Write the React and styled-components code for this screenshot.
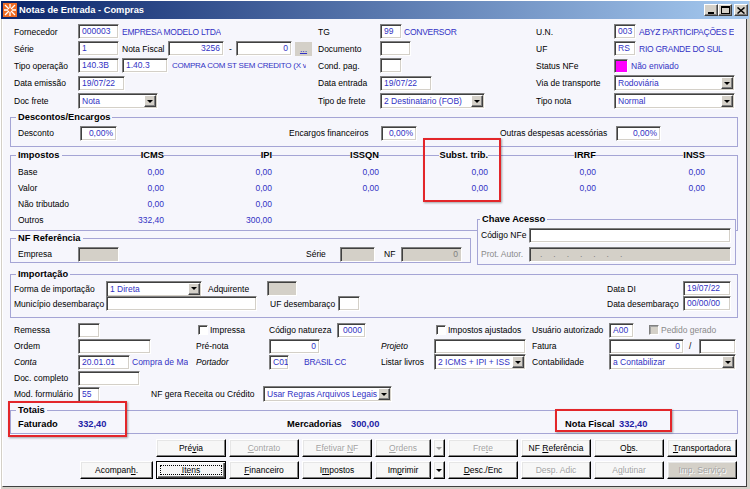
import React from "react";
import styled, { createGlobalStyle, css } from "styled-components";

const FONT = `"Liberation Sans", Arial, sans-serif`;
const BLUE = "#3232c4";
const NAVY = "#2323a6";
const BG = "#f6f6fc";
const FACE = "#d4d0c8";
const LINE = "#a5a5d5";

const GlobalStyle = createGlobalStyle`
  * { box-sizing: border-box; }
  html, body { margin: 0; padding: 0; background: ${FACE}; overflow: hidden; }
  body { font-family: ${FONT}; font-size: 8.5px; color: #000; }
`;

const Window = styled.div`
  position: relative;
  width: 750px;
  height: 489px;
  background: ${FACE};
  padding: 1px 1px 2px 1px;
  display: flex;
  flex-direction: column;
  box-shadow: inset 1px 1px 0 #fff;
`;

const TitleBar = styled.div`
  flex: none;
  height: 18px;
  display: flex;
  align-items: center;
  gap: 2px;
  padding: 0 1px 0 2px;
  background: linear-gradient(to right, #0a246a, #a6caf0);
  color: #fff;
  font-weight: bold;
  font-size: 9.3px;
`;

const Caps = styled.div`
  margin-left: auto;
  display: flex;
  align-items: center;
`;

const CapBtn = styled.div`
  width: 14px;
  height: 12px;
  margin-left: ${(p) => (p.$gap ? 2 : 0)}px;
  background: ${FACE};
  border: 1px solid;
  border-color: #fff #404040 #404040 #fff;
  box-shadow: inset -1px -1px 0 #808080;
  display: flex;
  align-items: center;
  justify-content: center;
`;

const Body = styled.div`
  flex: 1;
  margin: 0 2px 0 1px;
  background: ${BG};
  border-left: 1px solid #fff;
  border-right: 1px solid #404040;
  border-bottom: 1px solid #404040;
  padding: 4px 8px 0 7px;
  display: flex;
  flex-direction: column;
`;

const TopGrid = styled.div`
  display: grid;
  grid-template-columns: 64px 240px 62px 156px 78px 1fr;
  grid-template-rows: 17px 17px 17px 18px 18px;
  align-items: center;
  padding-left: 4px;
`;

const Cell = styled.div`
  display: flex;
  align-items: center;
  min-width: 0;
  height: 100%;
  ${(p) => p.$span && css`grid-column: span ${p.$span};`}
`;

const Lbl = styled.span`
  flex: none;
  white-space: nowrap;
  ${(p) => p.$w != null && css`width: ${p.$w}px;`}
  ${(p) => p.$ml != null && css`margin-left: ${p.$ml}px;`}
  ${(p) => p.$italic && css`font-style: italic;`}
  ${(p) => p.$dim && css`color: #8a8a8a;`}
  ${(p) => p.$bold && css`font-weight: bold; font-size: 9.3px;`}
`;

const Val = styled.span`
  flex: none;
  white-space: nowrap;
  overflow: hidden;
  color: ${(p) => (p.$bold ? NAVY : BLUE)};
  margin-left: ${(p) => p.$ml || 0}px;
  ${(p) => p.$w != null && css`width: ${p.$w}px;`}
  ${(p) => p.$bold && css`font-weight: bold; font-size: 9.3px;`}
  ${(p) => p.$caps && css`letter-spacing: -0.25px;`}
  ${(p) => p.$small && css`font-size: 8px;`}
`;

const sunken = css`
  border: 1px solid;
  border-color: #808080 #ffffff #ffffff #808080;
  box-shadow: inset 1px 1px 0 #404040, inset -1px -1px 0 #d4d0c8;
`;

const Field = styled.div`
  flex: none;
  width: ${(p) => p.$w}px;
  height: 15px;
  margin-left: ${(p) => p.$ml || 0}px;
  ${sunken}
  background: ${(p) => (p.$disabled ? FACE : "#fff")};
  color: ${(p) => (p.$disabled ? "#808080" : BLUE)};
  text-align: ${(p) => (p.$right ? "right" : "left")};
  padding: 0 3px;
  line-height: 13px;
  white-space: nowrap;
  overflow: hidden;
  ${(p) => p.$dots && css`letter-spacing: 4.3px; padding-left: 10px;`}
`;

const SelectBox = styled.div`
  flex: none;
  width: ${(p) => p.$w}px;
  height: 16px;
  margin-left: ${(p) => p.$ml || 0}px;
  display: flex;
  align-items: stretch;
  background: #fff;
  ${sunken}
  padding: 1px;
`;

const SelectText = styled.div`
  flex: 1;
  min-width: 0;
  padding-left: 2px;
  color: ${BLUE};
  line-height: 12px;
  overflow: hidden;
  white-space: nowrap;
`;

const DropBtn = styled.div`
  flex: none;
  width: 12px;
  background: ${FACE};
  border: 1px solid;
  border-color: #fff #404040 #404040 #fff;
  box-shadow: inset -1px -1px 0 #808080;
  display: flex;
  align-items: center;
  justify-content: center;
`;

const Tri = styled.span`
  width: 0;
  height: 0;
  border-left: 3px solid transparent;
  border-right: 3px solid transparent;
  border-top: 3px solid ${(p) => (p.$dim ? "#a0a0a0" : "#000")};
`;

const DotBtn = styled.div`
  flex: none;
  width: 17px;
  height: 14px;
  margin-left: 3px;
  background: ${FACE};
  color: ${BLUE};
  text-align: center;
  line-height: 14px;
  text-decoration: underline;
`;

const Status = styled.span`
  flex: none;
  width: 14px;
  height: 14px;
  background: #ff00ff;
  border: 1px solid;
  border-color: #808080 #fff #fff #808080;
  box-shadow: inset 1px 1px 0 #404040;
`;

const Check = styled.span`
  flex: none;
  width: 10px;
  height: 10px;
  margin: 0 2px 0 ${(p) => p.$ml || 0}px;
  background: ${(p) => (p.$disabled ? FACE : "#fff")};
  border: 1px solid;
  border-color: #808080 #fff #fff #808080;
  box-shadow: inset 1px 1px 0 ${(p) => (p.$disabled ? "#a0a0a0" : "#404040")};
`;

const Group = styled.fieldset`
  margin: ${(p) => p.$mt || 0}px 0 0 0;
  min-width: 0;
  flex: none;
  ${(p) => p.$w && css`width: ${p.$w}px;`}
  border: 1px solid ${LINE};
  padding: ${(p) => p.$pt || 0}px 6px ${(p) => p.$pb || 0}px 3px;
  background: ${BG};
  position: relative;
  ${(p) => p.$over && css`z-index: 1;`}
`;

const Legend = styled.legend`
  margin-left: ${(p) => (p.$ml != null ? p.$ml : 2)}px;
  padding: 0 2px;
  height: 11px;
  line-height: 11px;
  font-weight: bold;
  font-size: 9.3px;
  white-space: nowrap;
  ${(p) => p.$full && css`width: calc(100% - 2px); padding-right: 0;`}
`;

const Row = styled.div`
  display: flex;
  align-items: center;
  height: ${(p) => p.$h || 16}px;
  padding-left: ${(p) => p.$pl || 0}px;
  margin-top: ${(p) => p.$mt || 0}px;
`;

const Spacer = styled.div`
  flex: 1;
`;

const TAX_COLS = "56px 90px 108px 107px 109px 108px 109px";

const TaxHead = styled.div`
  display: grid;
  grid-template-columns: ${TAX_COLS} 1fr;
  align-items: center;
  height: 11px;
`;

const HeadCell = styled.div`
  display: flex;
  align-items: center;
  height: 11px;
`;

const HLine = styled.span`
  flex: 1;
  height: 0;
  border-top: 1px solid ${LINE};
  margin-left: ${(p) => (p.$after ? 3 : 0)}px;
`;

const TaxGrid = styled.div`
  display: grid;
  grid-template-columns: ${TAX_COLS};
  grid-auto-rows: 16px;
  align-items: center;
  padding-left: 4px;
`;

const Num = styled.span`
  text-align: right;
  color: ${BLUE};
  white-space: nowrap;
`;

const SplitRow = styled.div`
  display: flex;
  align-items: flex-start;
  gap: 6px;
`;

const FormGrid = styled.div`
  display: grid;
  grid-template-columns: 64px 118px 73px 112px 53px 98px 77px 1fr;
  grid-auto-rows: 16px;
  align-items: center;
  padding-left: 4px;
  margin-top: 4px;
`;

const TotalGrid = styled.div`
  display: grid;
  grid-template-columns: 60px 209px 64px 214px 54px 1fr;
  height: 16px;
  align-items: center;
  padding-left: 4px;
`;

const BtnGrid = styled.div`
  display: grid;
  grid-template-columns: 73px repeat(8, 70px);
  grid-auto-rows: 18px;
  column-gap: 3px;
  row-gap: 4px;
  margin: 5px 0 0 70px;
`;

const Btn = styled.button`
  height: 18px;
  margin: 0;
  padding: 0;
  min-width: 0;
  font-family: ${FONT};
  font-size: 8.5px;
  background: ${(p) => (p.$grey ? FACE : "#f7f7f7")};
  border: 1px solid;
  border-color: #ffffff #000000 #000000 #ffffff;
  box-shadow: inset -1px -1px 0 #808080, inset 1px 1px 0 #e6e6e6;
  color: ${(p) => (p.disabled ? "#a3a3a3" : "#000")};
  text-shadow: ${(p) => (p.disabled ? "1px 1px 0 #fff" : "none")};
  display: flex;
  align-items: center;
  justify-content: center;
  ${(p) => p.$start && css`grid-column-start: ${p.$start};`}
  ${(p) => p.$arrow && css`flex: none; width: 12px;`}
  ${(p) => p.$main && css`flex: 1;`}
  ${(p) =>
    p.$default &&
    css`
      border: 1px solid #000;
      box-shadow: inset 1px 1px 0 #fff, inset -1px -1px 0 #404040, inset -2px -2px 0 #808080;
    `}
`;

const Focus = styled.span`
  flex: 1;
  align-self: stretch;
  margin: 3px;
  border: 1px dotted #000;
  display: flex;
  align-items: center;
  justify-content: center;
`;

const Split = styled.div`
  display: flex;
  gap: 2px;
`;

const Mark = styled.div`
  position: absolute;
  left: ${(p) => p.$x}px;
  top: ${(p) => p.$y}px;
  width: ${(p) => p.$w}px;
  height: ${(p) => p.$h}px;
  border: 2px solid #e3262a;
  box-shadow: 1px 1px 2px rgba(0, 0, 0, 0.35);
  pointer-events: none;
  z-index: 5;
`;

function Select({ w, ml, children }) {
  return (
    <SelectBox $w={w} $ml={ml}>
      <SelectText>{children}</SelectText>
      <DropBtn>
        <Tri />
      </DropBtn>
    </SelectBox>
  );
}

function TitleIcon() {
  return (
    <svg width="14" height="14" viewBox="0 0 14 14">
      <rect width="14" height="14" fill="#ee6a22" />
      <path
        d="M2 2 L6 6 M12 2 L8 6 M2 12 L6 8 M12 12 L8 8 M7 1 V5 M7 9 V13 M1 7 H5 M9 7 H13"
        stroke="#fff"
        strokeWidth="1.3"
      />
    </svg>
  );
}

const taxRows = [
  ["Base", ["0,00", "0,00", "0,00", "0,00", "0,00", "0,00"]],
  ["Valor", ["0,00", "0,00", "0,00", "0,00", "0,00", "0,00"]],
  ["Não tributado", ["0,00", "0,00"]],
  ["Outros", ["332,40", "300,00"]],
];

const taxHeads = ["ICMS", "IPI", "ISSQN", "Subst. trib.", "IRRF", "INSS"];

export default function App() {
  return (
    <>
      <GlobalStyle />
      <Window>
        <TitleBar>
          <TitleIcon />
          <span>Notas de Entrada - Compras</span>
          <Caps>
            <CapBtn>
              <svg width="8" height="7">
                <rect x="1" y="5" width="6" height="2" fill="#000" />
              </svg>
            </CapBtn>
            <CapBtn>
              <svg width="9" height="8">
                <rect x="0.5" y="0.5" width="8" height="7" fill="none" stroke="#000" />
                <rect x="0" y="0" width="9" height="2" fill="#000" />
              </svg>
            </CapBtn>
            <CapBtn $gap>
              <svg width="8" height="7">
                <path d="M0.5 0.5 L7.5 6.5 M7.5 0.5 L0.5 6.5" stroke="#000" strokeWidth="1.5" />
              </svg>
            </CapBtn>
          </Caps>
        </TitleBar>

        <Body>
          <TopGrid>
            <Lbl>Fornecedor</Lbl>
            <Cell>
              <Field $w={41}>000003</Field>
              <Val $ml={3} $caps>EMPRESA MODELO LTDA</Val>
            </Cell>
            <Lbl>TG</Lbl>
            <Cell>
              <Field $w={22}>99</Field>
              <Val $ml={2} $caps>CONVERSOR</Val>
            </Cell>
            <Lbl>U.N.</Lbl>
            <Cell>
              <Field $w={22}>003</Field>
              <Val $ml={3} $caps>ABYZ PARTICIPAÇÕES E</Val>
            </Cell>

            <Lbl>Série</Lbl>
            <Cell>
              <Field $w={41}>1</Field>
              <Lbl $ml={3} $w={46}>Nota Fiscal</Lbl>
              <Field $w={56} $right>3256</Field>
              <Lbl $ml={5} $w={7}>-</Lbl>
              <Field $w={56} $right>0</Field>
              <DotBtn>...</DotBtn>
            </Cell>
            <Lbl>Documento</Lbl>
            <Cell>
              <Field $w={31} />
            </Cell>
            <Lbl>UF</Lbl>
            <Cell>
              <Field $w={22}>RS</Field>
              <Val $ml={3} $caps>RIO GRANDE DO SUL</Val>
            </Cell>

            <Lbl>Tipo operação</Lbl>
            <Cell>
              <Field $w={41}>140.3B</Field>
              <Field $w={46} $ml={3}>1.40.3</Field>
              <Val $ml={4} $caps $small>COMPRA COM ST SEM CREDITO (X v</Val>
            </Cell>
            <Lbl>Cond. pag.</Lbl>
            <Cell>
              <Field $w={22} />
            </Cell>
            <Lbl>Status NFe</Lbl>
            <Cell>
              <Status />
              <Val $ml={3}>Não enviado</Val>
            </Cell>

            <Lbl>Data emissão</Lbl>
            <Cell>
              <Field $w={47}>19/07/22</Field>
            </Cell>
            <Lbl>Data entrada</Lbl>
            <Cell>
              <Field $w={52}>19/07/22</Field>
            </Cell>
            <Lbl>Via de transporte</Lbl>
            <Cell>
              <Select w={121}>Rodoviária</Select>
            </Cell>

            <Lbl>Doc frete</Lbl>
            <Cell>
              <Select w={80}>Nota</Select>
            </Cell>
            <Lbl>Tipo de frete</Lbl>
            <Cell>
              <Select w={105}>2 Destinatario (FOB)</Select>
            </Cell>
            <Lbl>Tipo nota</Lbl>
            <Cell>
              <Select w={121}>Normal</Select>
            </Cell>
          </TopGrid>

          <Group $mt={2} $pt={2} $pb={5}>
            <Legend>Descontos/Encargos</Legend>
            <Row $pl={4}>
              <Lbl $w={62}>Desconto</Lbl>
              <Field $w={37} $right>0,00%</Field>
              <Lbl $ml={172} $w={92}>Encargos financeiros</Lbl>
              <Field $w={36} $right>0,00%</Field>
              <Lbl $ml={83} $w={116}>Outras despesas acessórias</Lbl>
              <Field $w={45} $right>0,00%</Field>
            </Row>
          </Group>

          <Group $mt={3} $pt={3} $pb={2}>
            <Legend $full>
              <TaxHead>
                <HeadCell>
                  <span>Impostos</span>
                  <HLine $after />
                </HeadCell>
                {taxHeads.map((h) => (
                  <HeadCell key={h}>
                    <HLine />
                    <span>{h}</span>
                  </HeadCell>
                ))}
                <HeadCell>
                  <HLine />
                </HeadCell>
              </TaxHead>
            </Legend>
            <TaxGrid>
              {taxRows.map(([label, vals]) => (
                <React.Fragment key={label}>
                  <Lbl>{label}</Lbl>
                  {taxHeads.map((h, i) => (
                    <Num key={h}>{vals[i] || ""}</Num>
                  ))}
                </React.Fragment>
              ))}
            </TaxGrid>
          </Group>

          <SplitRow>
            <Group $w={461} $mt={2} $pt={2}>
              <Legend>NF Referência</Legend>
              <Row $pl={4}>
                <Lbl $w={60}>Empresa</Lbl>
                <Field $w={41} $disabled />
                <Lbl $ml={187} $w={34}>Série</Lbl>
                <Field $w={35} $disabled />
                <Lbl $ml={9} $w={17}>NF</Lbl>
                <Field $w={61} $disabled $right>0</Field>
              </Row>
            </Group>
            <Group $w={259} $mt={-17} $pt={2} $pb={2} $over>
              <Legend $ml={-1}>Chave Acesso</Legend>
              <Row>
                <Lbl $w={48}>Código NFe</Lbl>
                <Field $w={202} />
              </Row>
              <Row $mt={3}>
                <Lbl $w={48} $dim>Prot. Autor.</Lbl>
                <Field $w={202} $disabled $dots>. . . . . . .</Field>
              </Row>
            </Group>
          </SplitRow>

          <Group $mt={4} $pt={1} $pb={6}>
            <Legend>Importação</Legend>
            <Row $h={15}>
              <Lbl $w={92}>Forma de importação</Lbl>
              <Select w={96}>1 Direta</Select>
              <Lbl $ml={6} $w={59}>Adquirente</Lbl>
              <Field $w={30} $disabled />
              <Spacer />
              <Lbl $w={76}>Data DI</Lbl>
              <Field $w={48}>19/07/22</Field>
            </Row>
            <Row $h={15}>
              <Lbl $w={92}>Município desembaraço</Lbl>
              <Field $w={151} />
              <Lbl $ml={13} $w={68}>UF desembaraço</Lbl>
              <Field $w={22} />
              <Spacer />
              <Lbl $w={76}>Data desembaraço</Lbl>
              <Field $w={48}>00/00/00</Field>
            </Row>
          </Group>

          <FormGrid>
            <Lbl>Remessa</Lbl>
            <Cell>
              <Field $w={22} />
            </Cell>
            <Cell>
              <Check $ml={2} />
              <Lbl>Impressa</Lbl>
            </Cell>
            <Cell>
              <Lbl $w={68}>Código natureza</Lbl>
              <Field $w={29} $right>0000</Field>
            </Cell>
            <Cell />
            <Cell>
              <Check $ml={2} />
              <Lbl>Impostos ajustados</Lbl>
            </Cell>
            <Lbl>Usuário autorizado</Lbl>
            <Cell>
              <Field $w={25}>A00</Field>
              <Check $ml={15} $disabled />
              <Lbl $dim>Pedido gerado</Lbl>
            </Cell>

            <Lbl>Ordem</Lbl>
            <Cell>
              <Field $w={73} />
            </Cell>
            <Lbl>Pré-nota</Lbl>
            <Cell>
              <Field $w={51} $right>0</Field>
            </Cell>
            <Lbl $italic>Projeto</Lbl>
            <Cell>
              <Field $w={92} />
            </Cell>
            <Lbl>Fatura</Lbl>
            <Cell>
              <Field $w={75} $right>0</Field>
              <Lbl $ml={5} $w={10}>/</Lbl>
              <Field $w={37} />
            </Cell>

            <Lbl $italic>Conta</Lbl>
            <Cell>
              <Field $w={52}>20.01.01</Field>
              <Val $ml={2}>Compra de Ma</Val>
            </Cell>
            <Lbl $italic>Portador</Lbl>
            <Cell>
              <Field $w={20}>C01</Field>
              <Val $ml={15} $caps>BRASIL CC</Val>
            </Cell>
            <Lbl>Listar livros</Lbl>
            <Cell>
              <Select w={92}>2 ICMS + IPI + ISS</Select>
            </Cell>
            <Lbl>Contabilidade</Lbl>
            <Cell>
              <Select w={127}>a Contabilizar</Select>
            </Cell>

            <Lbl>Doc. completo</Lbl>
            <Cell>
              <Field $w={62} />
            </Cell>
            <Cell $span={6} />

            <Lbl>Mod. formulário</Lbl>
            <Cell $span={4}>
              <Field $w={22}>55</Field>
              <Lbl $ml={51} $w={112}>NF gera Receita ou Crédito</Lbl>
              <Select w={129}>Usar Regras Arquivos Legais</Select>
            </Cell>
          </FormGrid>

          <Group $mt={3} $pb={1}>
            <Legend>Totais</Legend>
            <TotalGrid>
              <Lbl $bold>Faturado</Lbl>
              <Val $bold>332,40</Val>
              <Lbl $bold>Mercadorias</Lbl>
              <Val $bold>300,00</Val>
              <Lbl $bold>Nota Fiscal</Lbl>
              <Val $bold>332,40</Val>
            </TotalGrid>
          </Group>

          <BtnGrid>
            <Btn $start={2}>
              Pré<u>v</u>ia
            </Btn>
            <Btn disabled>
              <u>C</u>ontrato
            </Btn>
            <Btn disabled>
              Efetivar&nbsp;<u>N</u>F
            </Btn>
            <Split>
              <Btn $main disabled>
                <u>O</u>rdens
              </Btn>
              <Btn $arrow disabled>
                <Tri $dim />
              </Btn>
            </Split>
            <Btn disabled>
              Fre<u>t</u>e
            </Btn>
            <Btn>
              NF&nbsp;<u>R</u>eferência
            </Btn>
            <Btn>
              O<u>b</u>s.
            </Btn>
            <Btn>
              <u>T</u>ransportadora
            </Btn>

            <Btn>
              Acompan<u>h</u>.
            </Btn>
            <Btn $default>
              <Focus>
                <u>I</u>tens
              </Focus>
            </Btn>
            <Btn>
              <u>F</u>inanceiro
            </Btn>
            <Btn>
              I<u>m</u>postos
            </Btn>
            <Split>
              <Btn $main>
                Im<u>p</u>rimir
              </Btn>
              <Btn $arrow>
                <Tri />
              </Btn>
            </Split>
            <Btn>
              <u>D</u>esc./Enc
            </Btn>
            <Btn disabled>Desp. Adic</Btn>
            <Btn disabled>
              A<u>g</u>lutinar
            </Btn>
            <Btn disabled $grey>
              Imp. Serviço
            </Btn>
          </BtnGrid>
        </Body>

        <Mark $x={8} $y={401} $w={119} $h={36} />
        <Mark $x={423} $y={138} $w={78} $h={64} />
        <Mark $x={555} $y={409} $w={117} $h={23} />
      </Window>
    </>
  );
}
